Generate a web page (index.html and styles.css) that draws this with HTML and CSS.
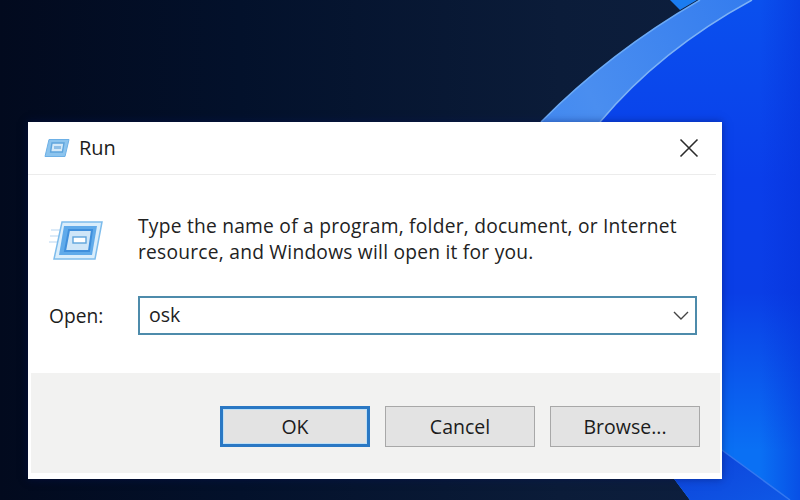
FILE: index.html
```html
<!DOCTYPE html>
<html lang="en">
<head>
<meta charset="utf-8">
<title>Run</title>
<link rel="stylesheet" href="styles.css">
</head>
<body>
<div class="desktop">
  <svg class="wallpaper" viewBox="0 0 800 500" width="800" height="500" aria-hidden="true">
    <defs>
      <linearGradient id="bg" x1="0" y1="0" x2="1" y2="0">
        <stop offset="0" stop-color="#020a1e"/>
        <stop offset="0.3" stop-color="#03112b"/>
        <stop offset="0.7" stop-color="#0b1c39"/>
        <stop offset="1" stop-color="#0e2040"/>
      </linearGradient>
      <linearGradient id="band" x1="0" y1="1" x2="1" y2="0">
        <stop offset="0" stop-color="#2c7df4"/>
        <stop offset="0.5" stop-color="#4a8ef0"/>
        <stop offset="1" stop-color="#2f78ee"/>
      </linearGradient>
      <linearGradient id="core" gradientUnits="userSpaceOnUse" x1="0" y1="0" x2="0" y2="450">
        <stop offset="0" stop-color="#0a50ee"/>
        <stop offset="0.4" stop-color="#0a3eea"/>
        <stop offset="0.65" stop-color="#0a3ee6"/>
        <stop offset="1" stop-color="#0a70f4"/>
      </linearGradient>
      <linearGradient id="edge" gradientUnits="userSpaceOnUse" x1="760" y1="0" x2="800" y2="0">
        <stop offset="0" stop-color="#0630d8" stop-opacity="0"/>
        <stop offset="1" stop-color="#0630d8" stop-opacity="0.5"/>
      </linearGradient>
      <linearGradient id="low" x1="0" y1="0" x2="1" y2="1">
        <stop offset="0" stop-color="#0c3fd8"/>
        <stop offset="1" stop-color="#0f58e6"/>
      </linearGradient>
    </defs>
    <rect width="800" height="500" fill="url(#bg)"/>
    <path d="M670 0 L697 0 L680 10 Z" fill="#1a7cf0"/>
    <path d="M541 122 Q610 52 700 0 L800 0 L800 500 L690 500 L660 460 L541 460 Z" fill="url(#band)"/>
    <path d="M600 122 Q660 50 752 0 L800 0 L800 500 L690 500 L660 460 L600 460 Z" fill="url(#core)"/>
    <path d="M760 0 H800 V500 H760 Z" fill="url(#edge)"/>
    <path d="M541 122 Q610 52 700 0" fill="none" stroke="#6aa9f6" stroke-width="1.5"/>
    <path d="M600 122 Q660 50 752 0" fill="none" stroke="#7db2f6" stroke-width="1.5"/>
    <path d="M715 445 L790 500 L690 500 L660 460 Z" fill="url(#low)"/>
    <path d="M715 445 L790 500" fill="none" stroke="#3478f0" stroke-width="1.5"/>
  </svg>

  <section class="dialog">
    <header class="titlebar">
      <svg class="run-icon-small" viewBox="0 0 26 20" width="26" height="20" aria-hidden="true">
        <path d="M5 1.5 H25 L21 18.5 H1 Z" fill="#8cc4ee" stroke="#6db0e6"/>
        <path d="M8 5 H20 L18.4 14 H6.6 Z" fill="#d4e9f8" stroke="#5ea4dc" stroke-width="1.4"/>
        <rect x="10" y="8" width="7" height="3" fill="#8fbfe6"/>
      </svg>
      <span class="title">Run</span>
      <svg class="close" viewBox="0 0 20 20" width="20" height="20" aria-hidden="true">
        <path d="M1.5 1.5 L18.5 18.5 M18.5 1.5 L1.5 18.5" stroke="#2b2b2b" stroke-width="1.6" fill="none"/>
      </svg>
    </header>

    <div class="content">
      <div class="intro">
        <svg class="run-icon" viewBox="0 0 54 40" width="54" height="40" aria-hidden="true">
          <path d="M2 9 H14 M1 15 H12 M0 21 H11" stroke="#cfe4f6" stroke-width="1.5"/>
          <path d="M13 1 H53 L46 38 H5 Z" fill="#d9edfb" stroke="#7dbcec" stroke-width="1.5"/>
          <path d="M15 5 H48 L43 34 H10 Z" fill="#5faaea"/>
          <path d="M20 9 H43 L40 30 H16 Z" fill="#cfe6f8" stroke="#3f8fdc" stroke-width="2"/>
          <rect x="24" y="16" width="13" height="6" fill="#fff" stroke="#5ea4dc" stroke-width="1.4"/>
        </svg>
        <p class="message">Type the name of a program, folder, document, or Internet<br>resource, and Windows will open it for you.</p>
      </div>
      <div class="open-row">
        <label class="open-label">Open:</label>
        <div class="combo">
          <span class="combo-value">osk</span>
          <svg class="chevron" viewBox="0 0 16 9" width="16" height="9" aria-hidden="true">
            <path d="M1 1 L8 8 L15 1" stroke="#444" stroke-width="1.4" fill="none"/>
          </svg>
        </div>
      </div>
    </div>

    <footer class="actions">
      <button class="btn btn-default">OK</button>
      <button class="btn">Cancel</button>
      <button class="btn">Browse...</button>
    </footer>
  </section>
</div>
</body>
</html>
```

FILE: styles.css
```css
html, body {
  margin: 0;
  padding: 0;
}

body {
  width: 800px;
  height: 500px;
  overflow: hidden;
  font-family: "Open Sans", "Noto Sans", sans-serif;
  color: #1c1c1c;
}

.desktop {
  position: relative;
  width: 800px;
  height: 500px;
  overflow: hidden;
}

.wallpaper {
  position: absolute;
  inset: 0;
  display: block;
}

.dialog {
  position: absolute;
  left: 28px;
  top: 122px;
  width: 694px;
  height: 357px;
  background: #fff;
  display: flex;
  flex-direction: column;
  box-shadow: 0 0 8px rgba(5, 20, 90, 0.5);
}

.titlebar {
  height: 53px;
  box-sizing: border-box;
  display: flex;
  align-items: center;
  padding: 0 17px 1px 16px;
  gap: 9px;
  border-bottom: 1px solid #ececec;
  margin: 0 6px 0 0;
}

.title {
  font-size: 20px;
  flex: 1;
}

.content {
  flex: 1;
  padding: 38px 25px 0 21px;
  display: flex;
  flex-direction: column;
}

.intro {
  display: flex;
  align-items: flex-start;
  height: 83px;
}

.run-icon {
  margin: 8px 35px 0 0;
  flex: none;
}

.message {
  margin: 0;
  font-size: 19.2px;
  line-height: 26px;
  letter-spacing: 0.24px;
  white-space: nowrap;
  color: #222;
}

.open-row {
  display: flex;
  align-items: center;
  height: 39px;
}

.open-label {
  width: 89px;
  font-size: 19.2px;
}

.combo {
  flex: 1;
  height: 39px;
  box-sizing: border-box;
  border: 2px solid #4d8bab;
  display: flex;
  align-items: center;
  justify-content: space-between;
  padding: 0 6px 0 9px;
  background: #fff;
}

.combo-value {
  font-size: 19.6px;
  padding-bottom: 2px;
  color: #222;
}

.actions {
  height: 100px;
  margin: 0 2px 6px 3px;
  box-sizing: border-box;
  background: #f2f2f1;
  display: flex;
  justify-content: flex-end;
  align-items: flex-start;
  gap: 15px;
  padding: 33px 20px 0 0;
}

.btn {
  width: 150px;
  height: 41px;
  box-sizing: border-box;
  border: 1.5px solid #a8a8a8;
  background: #e3e3e3;
  font-family: inherit;
  font-size: 19.5px;
  color: #1c1c1c;
  padding: 0;
}

.btn-default {
  border: 3px solid #2a78c4;
  box-shadow: inset 0 0 0 1px #bfe0f6;
}
```
